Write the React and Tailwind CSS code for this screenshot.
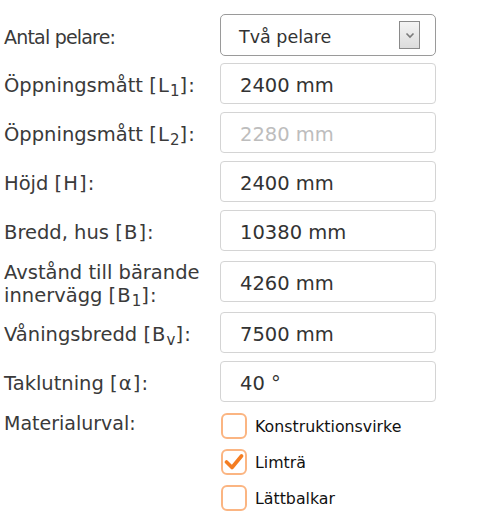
import React from "react";

const font = { fontFamily: '"DejaVu Sans", Verdana, sans-serif' };

function Sub({ children }) {
  return <span className="text-[15px] relative top-[4px] leading-none tracking-normal">{children}</span>;
}

function Br({ children }) {
  return <span className="tracking-[1.1px]">{children}</span>;
}

function Label({ children, className = "" }) {
  return (
    <div className={"w-[216px] shrink-0 leading-[23px] text-[#3a3a3a] pt-[4px] " + className}>
      {children}
    </div>
  );
}

function Input({ value, muted }) {
  return (
    <div
      className={
        "w-[216px] h-[41px] border border-[#d4d4d4] rounded-[4px] bg-white pl-[19px] pt-[4px] flex items-center text-[19.5px] " +
        (muted ? "text-[#bdbdbd]" : "text-[#333333]")
      }
    >
      {value}
    </div>
  );
}

function Row({ label, value, muted, className = "" }) {
  return (
    <div className={"flex items-center " + className}>
      <Label className="text-[19.5px]">{label}</Label>
      <Input value={value} muted={muted} />
    </div>
  );
}

function Checkbox({ checked, label }) {
  return (
    <div className="h-[36px] flex items-center">
      <div className="w-[26px] h-[26px] ml-[1px] rounded-[6px] border-2 border-[#fbb582] bg-white flex items-center justify-center">
        {checked && (
          <svg width="20" height="18" viewBox="0 0 20 18">
            <path d="M2.5 9 L8 14.5 L17.5 3" fill="none" stroke="#f47d22" strokeWidth="3.6" strokeLinecap="round" strokeLinejoin="round" />
          </svg>
        )}
      </div>
      <span className="ml-[8px] text-[15.8px] text-[#111111] pt-[2px]">{label}</span>
    </div>
  );
}

export default function App() {
  return (
    <div className="w-[480px] h-[528px] bg-white pt-[14px] pl-[4px] overflow-hidden" style={font}>
      <div className="flex items-center mb-[7px]">
        <Label className="text-[19px] tracking-[-0.8px]">Antal pelare:</Label>
        <div className="w-[216px] h-[42px] border border-[#9a9a9a] rounded-[5px] bg-white flex items-center pl-[18px] pr-[15px]">
          <span className="flex-1 text-[17.5px] text-[#333333] pt-[4px]">Två pelare</span>
          <div className="w-[21px] h-[28px] border border-[#8a8a8a] bg-gradient-to-b from-[#f4f4f4] to-[#dcdcdc] flex items-center justify-center">
            <svg width="10" height="7" viewBox="0 0 10 7">
              <path d="M1.5 1.5 L5 5 L8.5 1.5" fill="none" stroke="#7a7a7a" strokeWidth="1.6" />
            </svg>
          </div>
        </div>
      </div>
      <Row className="mb-[8px]" label={<>Öppningsmått <Br>[L<Sub>1</Sub>]:</Br></>} value="2400 mm" />
      <Row className="mb-[8px]" label={<>Öppningsmått <Br>[L<Sub>2</Sub>]:</Br></>} value="2280 mm" muted />
      <Row className="mb-[8px]" label={<>Höjd <Br>[H]:</Br></>} value="2400 mm" />
      <Row className="mb-[8px]" label={<>Bredd, hus <Br>[B]:</Br></>} value="10380 mm" />
      <Row
        className="mb-[8px] h-[45px]"
        label={<>Avstånd till bärande innervägg <Br>[B<Sub>1</Sub>]:</Br></>}
        value="4260 mm"
      />
      <Row className="mb-[8px]" label={<>Våningsbredd <Br>[B<Sub>v</Sub>]:</Br></>} value="7500 mm" />
      <Row label={<>Taklutning <Br>[α]:</Br></>} value="40 °" />
      <div className="flex mt-[6px]">
        <Label className="text-[19px] pt-[4px]">Materialurval:</Label>
        <div className="flex flex-col">
          <Checkbox label="Konstruktionsvirke" />
          <Checkbox checked label="Limträ" />
          <Checkbox label="Lättbalkar" />
        </div>
      </div>
    </div>
  );
}
